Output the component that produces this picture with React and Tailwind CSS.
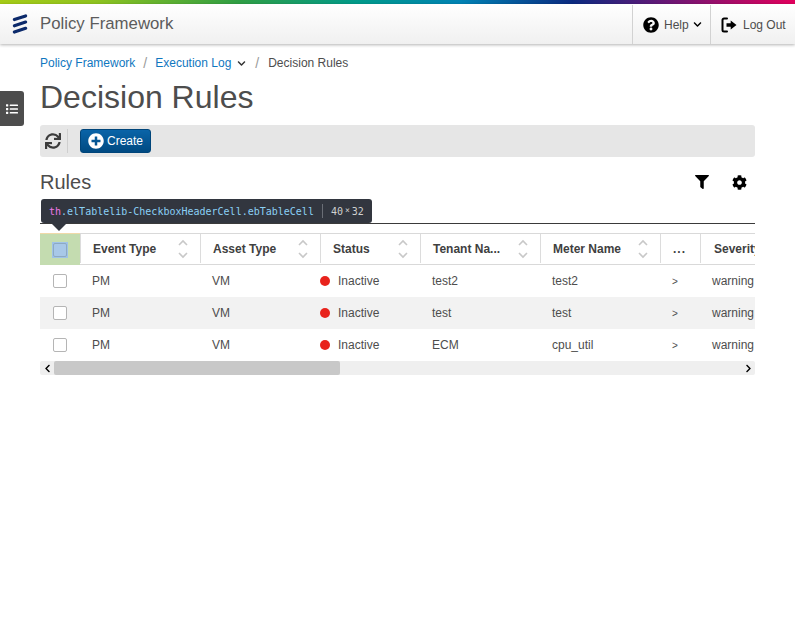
import React from 'react';
import { FaSync, FaPlusCircle, FaQuestionCircle, FaChevronDown, FaFilter, FaCog, FaList, FaChevronLeft, FaChevronRight } from 'react-icons/fa';

const columns = [
  { label: 'Event Type', width: 'w-[120px]' },
  { label: 'Asset Type', width: 'w-[120px]' },
  { label: 'Status', width: 'w-[100px]' },
  { label: 'Tenant Na...', width: 'w-[120px]' },
  { label: 'Meter Name', width: 'w-[120px]' },
];

const rows = [
  { tenant: 'test2', meter: 'test2', bg: 'bg-white' },
  { tenant: 'test', meter: 'test', bg: 'bg-[#f2f2f2]' },
  { tenant: 'ECM', meter: 'cpu_util', bg: 'bg-white' },
];

const SortIcon = () => (
  <svg width="10" height="20" viewBox="0 0 10 20" fill="none" stroke="#c8c8c8" strokeWidth="1.6" className="shrink-0">
    <path d="M1 6l4-4 4 4" />
    <path d="M1 14l4 4 4-4" />
  </svg>
);

const Logo = () => (
  <svg width="16" height="20" viewBox="0 0 16 20" fill="none" stroke="#0c2a6b" strokeWidth="3.2" strokeLinecap="round">
    <path d="M2.4 5.6L13.6 1.9" />
    <path d="M2.4 11.8L13.6 8.1" />
    <path d="M2.4 18L13.6 14.3" />
  </svg>
);

const LogOutIcon = () => (
  <svg width="16" height="16" viewBox="0 0 16 16" fill="none" className="shrink-0">
    <path d="M6 1.5H3a1.5 1.5 0 0 0-1.5 1.5v10A1.5 1.5 0 0 0 3 14.5h3" stroke="#000" strokeWidth="2" strokeLinecap="round" />
    <path d="M5.5 6.3h4.2V3.4L15.5 8l-5.8 4.6V9.7H5.5z" fill="#000" />
  </svg>
);

const Checkbox = () => (
  <span className="block w-[14px] h-[14px] rounded-[2px] border border-[#b5b5b5] bg-white" />
);

const App = () => {
  return (
    <div className="relative w-[795px] h-[636px] overflow-hidden bg-white text-[#4d4d4d] font-['Liberation_Sans',Arial,sans-serif]">
      <div className="h-1 bg-[linear-gradient(90deg,#a5cb17_0%,#8fc31f_12%,#2f9e44_30%,#009a8a_45%,#0082b4_58%,#0b2a80_72%,#5a1a78_82%,#a80c68_92%,#e2005c_100%)]" />

      {/* Header */}
      <header className="h-10 flex items-center justify-between bg-[linear-gradient(180deg,#ffffff,#f0f0f0)] shadow-[0_1px_3px_rgba(0,0,0,0.3)] relative">
        <div className="flex items-center pl-3 gap-[12px]">
          <Logo />
          <span className="text-[16.8px] text-[#5c5c5c]">Policy Framework</span>
        </div>
        <div className="flex h-full pt-px text-[12px] text-[#4d4d4d]">
          <div className="flex items-center gap-[5px] w-[78px] pl-[10px] border-l border-[#d2d2d2]">
            <FaQuestionCircle className="text-black text-[16px]" />
            <span>Help</span>
            <FaChevronDown className="text-black text-[9px] -ml-[1px]" />
          </div>
          <div className="flex items-center gap-[6px] w-[85px] pl-[10px] border-l border-[#d2d2d2]">
            <LogOutIcon />
            <span>Log Out</span>
          </div>
        </div>
      </header>

      {/* Side toggle */}
      <div className="absolute left-0 top-[91px] w-6 h-[35px] bg-[#4d4d4d] rounded-r-[3px] flex items-center justify-center">
        <FaList className="text-white text-[12px]" />
      </div>

      <main className="px-10">
        {/* Breadcrumb */}
        <div className="flex items-center h-[16px] mt-[11px] text-[12px]">
          <span className="text-[#0f77c0]">Policy Framework</span>
          <span className="mx-[8px] text-[#9a9a9a] text-[14px]">/</span>
          <span className="text-[#0f77c0]">Execution Log</span>
          <FaChevronDown className="text-[#333] text-[9px] ml-[6px]" />
          <span className="mx-[9px] text-[#9a9a9a] text-[14px]">/</span>
          <span className="text-[#4d4d4d]">Decision Rules</span>
        </div>

        <h1 className="text-[32px] leading-[37px] mt-[8px] text-[#4d4d4d]">Decision Rules</h1>

        {/* Toolbar */}
        <div className="flex items-center h-8 mt-[9px] bg-[#e6e6e6] rounded-[3px]">
          <FaSync className="text-[#3c3c3c] text-[16px] ml-[5px]" />
          <span className="w-px h-6 bg-[#cfcfcf] ml-[6px]" />
          <button
            type="button"
            className="flex items-center gap-[3px] h-6 ml-3 pl-[7px] pr-[7px] rounded-[3px] text-[12px] text-white bg-[linear-gradient(180deg,#0a64a8,#004a82)] border border-[#00457a]"
          >
            <FaPlusCircle className="text-white text-[16px]" />
            Create
          </button>
        </div>

        {/* Section head */}
        <div className="flex items-center justify-between h-[24px] mt-[13px]">
          <h2 className="text-[20px] leading-[24px] text-[#4d4d4d]">Rules</h2>
          <div className="flex items-center gap-[23px] pr-[9px]">
            <FaFilter className="text-black text-[14px] translate-x-px" />
            <FaCog className="text-black text-[15px] translate-x-px" />
          </div>
        </div>

        <div className="h-px bg-[#3a3a3a] mt-[29px]" />

        {/* Table */}
        <div className="w-[715px] overflow-hidden mt-[9px]">
          <div className="flex w-[900px] h-[32px] pb-px border-y border-y-[#d9d9d9] text-[12px] font-bold text-[#404040]">
            <div className="w-10 -mt-px h-[32px] bg-[#c4dcb0] border-t border-[#f0d9a8] flex items-center justify-center">
              <span className="flex items-center justify-center w-4 h-4 bg-[#9fc3e8]">
                <span className="block w-[14px] h-[14px] rounded-[2px] border border-[#8da9c4] bg-[#a8c8e8]" />
              </span>
            </div>
            {columns.map((col) => (
              <div key={col.label} className={`${col.width} flex items-center justify-between pl-3 pr-3 border-l border-[#dcdcdc]`}>
                <span>{col.label}</span>
                <SortIcon />
              </div>
            ))}
            <div className="w-10 flex items-center pl-3 border-l border-[#dcdcdc] tracking-[1px]">...</div>
            <div className="w-[120px] flex items-center pl-[13px] border-l border-[#dcdcdc]">Severity</div>
          </div>

          {rows.map((row, i) => (
            <div key={i} className={`flex w-[900px] h-8 items-center text-[12px] text-[#4d4d4d] ${row.bg}`}>
              <div className="w-10 flex justify-center"><Checkbox /></div>
              <div className="w-[120px] pl-3">PM</div>
              <div className="w-[120px] pl-3">VM</div>
              <div className="w-[100px] flex items-center gap-2">
                <span className="w-[10px] h-[10px] rounded-full bg-[#e8231c]" />
                Inactive
              </div>
              <div className="w-[120px] pl-3">{row.tenant}</div>
              <div className="w-[120px] pl-3">{row.meter}</div>
              <div className="w-10 pl-3 text-[10px]">&gt;</div>
              <div className="w-[120px] pl-3">warning</div>
            </div>
          ))}

          {/* Scrollbar */}
          <div className="flex items-center h-[14px] bg-[#efefef] rounded-[2px]">
            <div className="w-[14px] flex justify-center"><FaChevronLeft className="text-black text-[9px]" /></div>
            <div className="w-[286px] h-full bg-[#c8c8c8] rounded-[2px]" />
            <div className="flex-1 flex justify-end pr-[2px]"><FaChevronRight className="text-black text-[9px]" /></div>
          </div>
        </div>
      </main>

      {/* Devtools inspect tooltip */}
      <div className="absolute left-[41px] top-[199px] h-6 flex items-center px-2 rounded-[3px] bg-[#32363f] font-['DejaVu_Sans_Mono','Liberation_Mono',monospace] text-[10px] whitespace-nowrap">
        <span className="text-[#ee78e6]">th</span>
        <span className="text-[#8ad0f5]">.elTablelib-CheckboxHeaderCell.ebTableCell</span>
        <span className="w-px h-[14px] bg-[#6a6e76] mx-2" />
        <span className="flex items-center gap-[2px] text-[#d0d0d0]">
          <span>40</span>
          <span className="text-[8px]">×</span>
          <span>32</span>
        </span>
      </div>
      <div className="absolute left-[51px] top-[223px] w-0 h-0 border-x-[8px] border-x-transparent border-t-[8px] border-t-[#32363f]" />
    </div>
  );
};

export default App;
